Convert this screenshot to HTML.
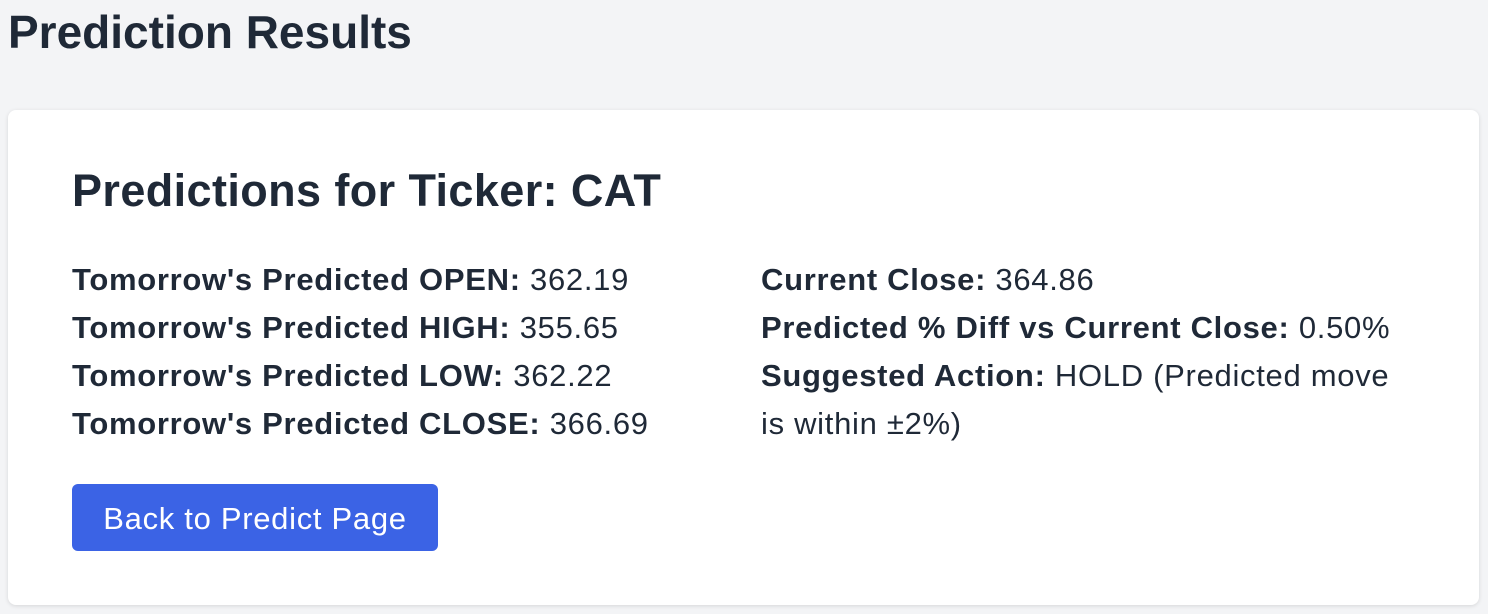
<!DOCTYPE html>
<html><head><style>
html,body{margin:0;padding:0;}
body{width:1488px;height:614px;background:#f3f4f6;font-family:"Liberation Sans",sans-serif;color:#1f2937;position:relative;overflow:hidden;}
.h1{position:absolute;left:8px;top:4px;font-size:46px;font-weight:bold;line-height:56px;letter-spacing:0px;white-space:nowrap;}
.card{position:absolute;left:8px;top:110px;width:1471px;height:495px;background:#fff;border-radius:8px;box-shadow:0 1px 4px rgba(0,0,0,0.12);}
.h2{position:absolute;left:72px;top:163px;font-size:45px;font-weight:bold;line-height:56px;letter-spacing:0.4px;white-space:nowrap;}
.col{position:absolute;top:256px;font-size:31px;line-height:48px;letter-spacing:0.7px;}
.col b{font-weight:bold;}
.l{left:72px;white-space:nowrap;}
.r{left:761px;width:680px;}
.btn{position:absolute;left:72px;top:484px;width:366px;height:67px;background:#3b63e5;border-radius:6px;color:#fff;font-size:31px;line-height:69px;text-align:center;letter-spacing:0.7px;}
</style></head><body>
<div class="h1">Prediction Results</div>
<div class="card"></div>
<div class="h2">Predictions for Ticker: CAT</div>
<div class="col l">
<div><b>Tomorrow's Predicted OPEN:</b> 362.19</div>
<div><b>Tomorrow's Predicted HIGH:</b> 355.65</div>
<div><b>Tomorrow's Predicted LOW:</b> 362.22</div>
<div><b>Tomorrow's Predicted CLOSE:</b> 366.69</div>
</div>
<div class="col r">
<div><b>Current Close:</b> 364.86</div>
<div><b>Predicted % Diff vs Current Close:</b> 0.50%</div>
<div><b>Suggested Action:</b> HOLD (Predicted move<br>is within ±2%)</div>
</div>
<div class="btn">Back to Predict Page</div>
</body></html>
